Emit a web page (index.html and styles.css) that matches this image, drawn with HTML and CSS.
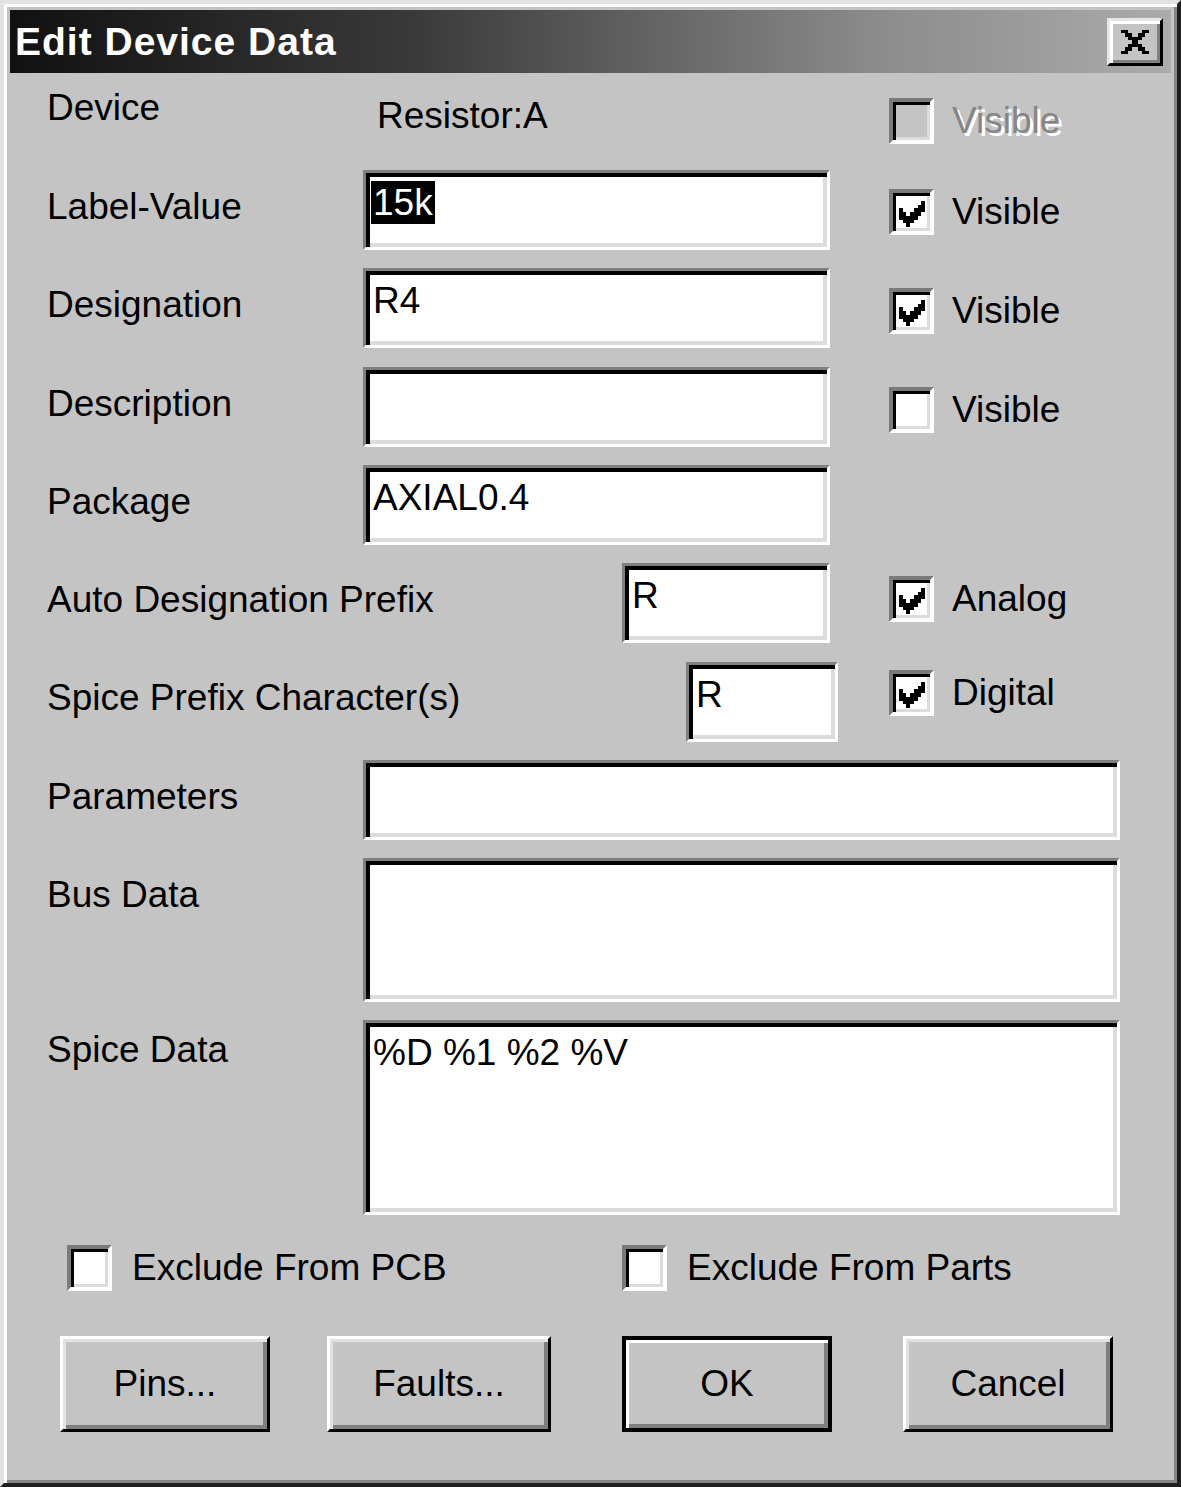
FILE: index.html
```html
<!DOCTYPE html>
<html>
<head>
<meta charset="utf-8">
<title>Edit Device Data</title>
<link rel="stylesheet" href="styles.css">
</head>
<body>
<div class="window">
  <div class="titlebar">
    <span class="title">Edit Device Data</span>
    <div class="close-btn">
      <svg class="close-x" viewBox="0 0 8 7" width="28" height="24" shape-rendering="crispEdges">
        <path d="M0 0h2v1h-2z M6 0h2v1h-2z M1 1h2v1h-2z M5 1h2v1h-2z M2 2h4v1h-4z M3 3h2v1h-2z M2 4h4v1h-4z M1 5h2v1h-2z M5 5h2v1h-2z M0 6h2v1h-2z M6 6h2v1h-2z" fill="#000"/>
      </svg>
    </div>
  </div>

  <div class="content">
    <div class="row row-device">
      <div class="label lbl-device">Device</div>
      <div class="static">Resistor:A</div>
      <div class="check chk-device disabled"><span class="box"></span><span class="check-text">Visible</span></div>
    </div>

    <div class="row">
      <div class="label">Label-Value</div>
      <div class="edit"><span class="sel">15k</span></div>
      <div class="check chk-1"><span class="box"><svg class="tick" viewBox="0 0 7 7" width="26" height="26" shape-rendering="crispEdges"><path d="M6 0h1v1h-1z M5 1h2v1h-2z M0 2h1v1h-1z M4 2h3v1h-3z M0 3h2v1h-2z M3 3h3v1h-3z M0 4h5v1h-5z M1 5h3v1h-3z M2 6h1v1h-1z" fill="#000"/></svg></span><span class="check-text">Visible</span></div>
    </div>

    <div class="row">
      <div class="label">Designation</div>
      <div class="edit">R4</div>
      <div class="check chk-2"><span class="box"><svg class="tick" viewBox="0 0 7 7" width="26" height="26" shape-rendering="crispEdges"><path d="M6 0h1v1h-1z M5 1h2v1h-2z M0 2h1v1h-1z M4 2h3v1h-3z M0 3h2v1h-2z M3 3h3v1h-3z M0 4h5v1h-5z M1 5h3v1h-3z M2 6h1v1h-1z" fill="#000"/></svg></span><span class="check-text">Visible</span></div>
    </div>

    <div class="row row-gap1">
      <div class="label">Description</div>
      <div class="edit"></div>
      <div class="check chk-2"><span class="box"></span><span class="check-text">Visible</span></div>
    </div>

    <div class="row">
      <div class="label">Package</div>
      <div class="edit">AXIAL0.4</div>
    </div>

    <div class="row row-auto">
      <div class="label">Auto Designation Prefix</div>
      <div class="edit">R</div>
      <div class="check chk-analog"><span class="box"><svg class="tick" viewBox="0 0 7 7" width="26" height="26" shape-rendering="crispEdges"><path d="M6 0h1v1h-1z M5 1h2v1h-2z M0 2h1v1h-1z M4 2h3v1h-3z M0 3h2v1h-2z M3 3h3v1h-3z M0 4h5v1h-5z M1 5h3v1h-3z M2 6h1v1h-1z" fill="#000"/></svg></span><span class="check-text">Analog</span></div>
    </div>

    <div class="row row-spice row-gap1">
      <div class="label lbl-spice">Spice Prefix Character(s)</div>
      <div class="edit">R</div>
      <div class="check chk-digital"><span class="box"><svg class="tick" viewBox="0 0 7 7" width="26" height="26" shape-rendering="crispEdges"><path d="M6 0h1v1h-1z M5 1h2v1h-2z M0 2h1v1h-1z M4 2h3v1h-3z M0 3h2v1h-2z M3 3h3v1h-3z M0 4h5v1h-5z M1 5h3v1h-3z M2 6h1v1h-1z" fill="#000"/></svg></span><span class="check-text">Digital</span></div>
    </div>

    <div class="row row-wide">
      <div class="label">Parameters</div>
      <div class="edit"></div>
    </div>

    <div class="row row-wide row-bus">
      <div class="label">Bus Data</div>
      <div class="edit"></div>
    </div>

    <div class="row row-wide row-spicedata">
      <div class="label lbl-spicedata">Spice Data</div>
      <div class="edit">%D %1 %2 %V</div>
    </div>

    <div class="exclude-row">
      <div class="check ex-pcb"><span class="box"></span><span class="check-text">Exclude From PCB</span></div>
      <div class="check ex-parts"><span class="box"></span><span class="check-text">Exclude From Parts</span></div>
    </div>

    <div class="button-row">
      <div class="btn btn-pins">Pins...</div>
      <div class="btn btn-faults">Faults...</div>
      <div class="btn btn-ok">OK</div>
      <div class="btn btn-cancel">Cancel</div>
    </div>
  </div>
</div>
</body>
</html>
```

FILE: styles.css
```css
html, body {
  margin: 0;
  padding: 0;
  background: #c4c4c4;
}

body {
  font-family: "Liberation Sans", Arial, sans-serif;
  font-size: 37px;
  line-height: 44px;
  color: #000;
}

.window {
  box-sizing: border-box;
  width: 1181px;
  height: 1487px;
  background: #c4c4c4;
  border: 4px solid;
  border-color: #e2e2e2 #1e1e1e #1e1e1e #e2e2e2;
  box-shadow: inset 3px 3px 0 #ffffff, inset -3px -3px 0 #858585;
  padding: 6px;
}

.titlebar {
  height: 63px;
  display: flex;
  align-items: center;
  justify-content: space-between;
  background: linear-gradient(to right, #111111 0%, #3a3a3a 35%, #8c8c8c 75%, #ababab 100%);
  padding: 0 8px 0 5px;
}

.title {
  color: #fff;
  font-weight: bold;
  font-size: 39px;
  letter-spacing: 1px;
  line-height: 44px;
}

.close-btn {
  box-sizing: border-box;
  width: 56px;
  height: 48px;
  background: #c4c4c4;
  border: 3px solid;
  border-color: #e6e6e6 #000 #000 #e6e6e6;
  box-shadow: inset 3px 3px 0 #ffffff, inset -3px -3px 0 #808080;
  display: flex;
  align-items: center;
  justify-content: center;
}

.content {
  padding: 0 0 0 37px;
}

.row {
  display: grid;
  grid-template-columns: 316px 467px 1fr;
  align-items: start;
  height: 80px;
  margin-top: 18px;
}

.row-device {
  height: 79px;
  margin-top: 0;
}

.row-gap1 {
  margin-top: 19px;
}

.row-auto {
  grid-template-columns: 575px 208px 1fr;
}

.row-spice {
  grid-template-columns: 639px 152px 1fr;
}

.row-wide {
  grid-template-columns: 316px 757px;
}

.row-bus {
  height: 144px;
}

.row-spicedata {
  height: 195px;
}

.label {
  margin-top: 15px;
  white-space: nowrap;
}

.lbl-device {
  margin-top: 13px;
}

.lbl-spice {
  margin-top: 14px;
}

.lbl-spicedata {
  margin-top: 8px;
}

.static {
  margin-top: 21px;
  padding-left: 14px;
}

.edit {
  box-sizing: border-box;
  height: 100%;
  background: #fff;
  border: 3px solid;
  border-color: #808080 #ffffff #ffffff #808080;
  box-shadow: inset 4px 4px 0 #000, inset -4px -4px 0 #dcdcdc;
  padding: 8px 6px 0 7px;
  white-space: nowrap;
  overflow: hidden;
}

.sel {
  background: #000;
  color: #fff;
  display: inline-block;
  padding: 0 2px;
  margin-left: -2px;
  line-height: 43px;
}

.check {
  display: flex;
  align-items: center;
  padding-left: 59px;
  white-space: nowrap;
}

.row-spice .check {
  padding-left: 51px;
}

.chk-device { margin-top: 25px; }
.chk-1 { margin-top: 19px; }
.chk-2 { margin-top: 20px; }
.chk-analog { margin-top: 13px; }
.chk-digital { margin-top: 8px; }

.box {
  box-sizing: border-box;
  width: 45px;
  height: 46px;
  flex: none;
  display: block;
  background: #fff;
  border: 4px solid;
  border-color: #7a7a7a #ffffff #ffffff #7a7a7a;
  box-shadow: inset 3px 3px 0 #000, inset -3px -3px 0 #dcdcdc;
}

.tick {
  display: block;
  margin-top: 8px;
  margin-left: 6px;
}

.check-text {
  margin-left: 18px;
}

.disabled .box {
  background: #c4c4c4;
}

.disabled .check-text {
  color: #868686;
  text-shadow: 3px 3px 0 #ffffff;
}

.exclude-row {
  display: flex;
  margin-top: 30px;
  height: 45px;
}

.exclude-row .check {
  padding-left: 0;
}

.ex-pcb {
  margin-left: 20px;
  width: 555px;
}

.ex-parts .check-text,
.ex-pcb .check-text {
  margin-left: 20px;
}

.button-row {
  display: flex;
  margin-top: 46px;
  height: 96px;
  padding-left: 13px;
}

.btn {
  box-sizing: border-box;
  height: 96px;
  width: 210px;
  display: flex;
  align-items: center;
  justify-content: center;
  background: #c4c4c4;
  border: 3px solid;
  border-color: #ffffff #000 #000 #ffffff;
  box-shadow: inset 3px 3px 0 #e2e2e2, inset -4px -4px 0 #808080;
}

.btn-faults {
  width: 224px;
  margin-left: 57px;
}

.btn-ok {
  margin-left: 71px;
  border: 4px solid #000;
  box-shadow: inset 3px 3px 0 #ffffff, inset -4px -4px 0 #808080;
}

.btn-cancel {
  margin-left: 71px;
}
```
